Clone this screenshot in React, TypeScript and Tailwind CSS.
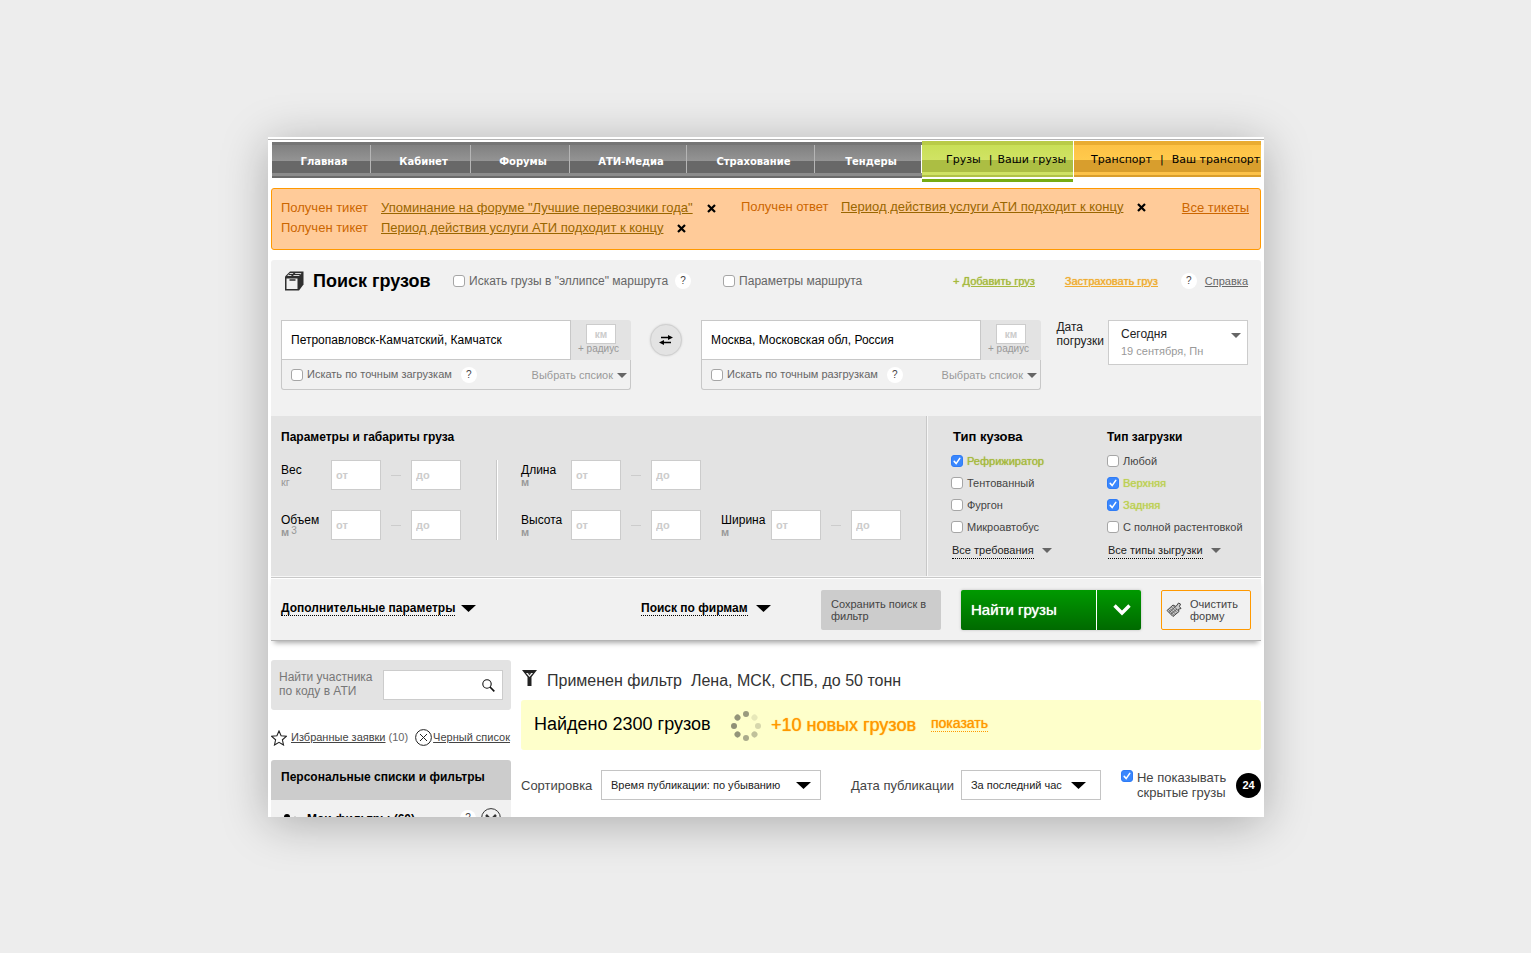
import type { ReactNode } from 'react'
import clsx from 'clsx'

const navItems = [
  { label: 'Главная', width: 'w-[99px]' },
  { label: 'Кабинет', width: 'w-[100px]' },
  { label: 'Форумы', width: 'w-[99px]' },
  { label: 'АТИ-Медиа', width: 'w-[117px]' },
  { label: 'Страхование', width: 'w-[128px]' },
  { label: 'Тендеры', width: 'w-[107px]' },
]

const bodyTypes = [
  { label: 'Рефрижиратор', checked: true, color: 'text-[#a6b93c]' },
  { label: 'Тентованный' },
  { label: 'Фургон' },
  { label: 'Микроавтобус' },
]

const loadTypes = [
  { label: 'Любой' },
  { label: 'Верхняя', checked: true, color: 'text-[#bdd052]' },
  { label: 'Задняя', checked: true, color: 'text-[#bdd052]' },
  { label: 'С полной растентовкой' },
]

function Checkbox({
  children,
  checked,
  className,
}: {
  children: ReactNode
  checked?: boolean
  className?: string
}) {
  return (
    <label className={clsx('flex items-center gap-[3px]', className)}>
      <span className="relative flex shrink-0">
        <input
          type="checkbox"
          defaultChecked={checked}
          className="peer size-3 appearance-none rounded-[3px] border border-[#a6a6a6] bg-white checked:border-[#2f7cf6] checked:bg-[#3a87fd]"
        />
        <svg
          viewBox="0 0 13 13"
          className="pointer-events-none absolute inset-0 hidden size-3 peer-checked:block"
        >
          <path d="M3.5 6.9 5.6 9.3 9.5 3.6" fill="none" stroke="#fff" strokeWidth="1.7" strokeLinecap="round" />
        </svg>
      </span>
      <span className="pl-px">{children}</span>
    </label>
  )
}

function Help() {
  return (
    <button
      type="button"
      aria-label="Подсказка"
      className="size-4 shrink-0 rounded-full bg-white text-center text-[10px] leading-4 text-[#444]"
    >
      ?
    </button>
  )
}

function Arrow({ className }: { className?: string }) {
  return (
    <svg viewBox="0 0 15 7" preserveAspectRatio="none" className={clsx('shrink-0 fill-current', className)}>
      <path d="M0 0h15L7.5 7z" />
    </svg>
  )
}

function Close() {
  return (
    <button type="button" aria-label="Закрыть" className="ml-[14px] size-[9px] shrink-0">
      <svg viewBox="0 0 9 9" className="size-[9px]">
        <path d="M1 1l7 7M8 1L1 8" stroke="#000" strokeWidth="2.2" />
      </svg>
    </button>
  )
}

function Ticket({ title, children }: { title: string; children: ReactNode }) {
  return (
    <div className="flex h-5 items-center">
      <span className="w-[100px] shrink-0 text-[#cc6600]">{title}</span>
      <a href="#" className="whitespace-nowrap text-[#996600] underline">
        {children}
      </a>
      <Close />
    </div>
  )
}

function Place({
  value,
  label,
  hint,
  className,
}: {
  value: string
  label: string
  hint: string
  className: string
}) {
  return (
    <div className={className}>
      <div className="flex h-10">
        <input
          aria-label={label}
          defaultValue={value}
          className="h-10 min-w-0 flex-1 border border-[#c8c8c8] bg-white px-[9px] text-[12px] text-black"
        />
        <div className="flex w-[60px] flex-col items-center rounded-tr-[3px] bg-[#e3e3e3] pt-1 text-[#999]">
          <input
            aria-label={`${label}: радиус, км`}
            placeholder="км"
            className="h-5 w-[30px] border border-[#ccc] bg-white text-center text-[10px] font-bold placeholder:text-[#ccc]"
          />
          <span className="pr-[5px] text-[10px] leading-[10px]">+ радиус</span>
        </div>
      </div>
      <div className="flex h-[30px] items-center rounded-b-[3px] border border-t-0 border-[#c8c8c8] pr-[3px] pl-[9px] text-[11px] text-[#666]">
        <Checkbox>{hint}</Checkbox>
        <span className="ml-[9px] flex">
          <Help />
        </span>
        <button type="button" className="ml-auto flex items-center gap-1 pt-[2px] text-[#999]">
          Выбрать спсиок
          <Arrow className="h-[5px] w-[10px] text-[#666]" />
        </button>
      </div>
    </div>
  )
}

function Range({ name, unit, className }: { name: string; unit: ReactNode; className?: string }) {
  const field =
    'h-[30px] w-[50px] border border-[#ccc] bg-white px-1 text-[11px] font-bold text-[#333] placeholder:text-[#ccc]'
  return (
    <div className={clsx('flex h-[30px] items-center', className)}>
      <div className="w-[50px] pt-[2px] text-[12px] leading-3 text-black">
        {name}
        <div className="flex gap-[2px] text-[11px] leading-3 text-[#999]">{unit}</div>
      </div>
      <input aria-label={`${name} от`} placeholder="от" className={field} />
      <span className="mx-[10px] h-px w-[10px] bg-[#ccc]" />
      <input aria-label={`${name} до`} placeholder="до" className={field} />
    </div>
  )
}

function TypeList({
  title,
  items,
  more,
  className,
  titleClass,
}: {
  title: string
  items: { label: string; checked?: boolean; color?: string }[]
  more: string
  className?: string
  titleClass: string
}) {
  return (
    <fieldset className={clsx('text-[11px] text-[#444]', className)}>
      <legend className={clsx('h-[34px] pt-[13px] leading-4 font-bold text-black', titleClass)}>{title}</legend>
      {items.map((item) => (
        <Checkbox
          key={item.label}
          checked={item.checked}
          className={clsx('h-[22px] whitespace-nowrap', item.color, item.color && '[text-shadow:0_0_1px_currentColor]')}
        >
          {item.label}
        </Checkbox>
      ))}
      <button type="button" className="mt-1 flex items-center gap-2 pl-px text-[#222]">
        <span className="border-b border-dotted border-black leading-4">{more}</span>
        <Arrow className="h-[5px] w-[10px] text-[#666]" />
      </button>
    </fieldset>
  )
}

function Select({ label, value, className, arrow }: { label: string; value: string; className: string; arrow: string }) {
  return (
    <div className={clsx('relative h-[30px]', className)}>
      <select
        aria-label={label}
        className="size-full appearance-none border border-[#c4c4c4] bg-white px-[9px] text-[11px] text-[#222]"
      >
        <option>{value}</option>
      </select>
      <Arrow className={clsx('pointer-events-none absolute top-[12px] h-[7px] w-[15px] text-black', arrow)} />
    </div>
  )
}

function Nav() {
  return (
    <nav className="ml-px flex font-['DejaVu_Sans',Verdana,sans-serif] text-[11px]">
      <div className="mt-px flex h-9 bg-[linear-gradient(#757575_3px,#808080_3px,#949494_19px,#686868_19px,#686868_31px,#8c8c8c_31px,#8c8c8c_34px,#6b6b6b_34px)] text-[10px] font-bold text-white">
        {navItems.map((item, i) => (
          <a
            key={item.label}
            href="#"
            className={clsx(
              'mt-[3px] flex h-7 items-center justify-center border-r pt-1 pl-[6px]',
              i < 5 ? 'border-[#b5b5b5]' : 'border-white',
              item.width,
            )}
          >
            {item.label}
          </a>
        ))}
      </div>
      <div className="w-[152px] border-r border-white">
        <div className="flex h-9 items-center bg-[linear-gradient(#b9cb47_4px,#c9df57_4px,#d0e364_19px,#acbe43_19px,#acbe43_31px,#cfe264_31px,#cfe264_34px,#b0c146_34px)] pt-[2px] pl-6 whitespace-nowrap text-black">
          <a href="#">Грузы</a>
          <span className="mr-[5px] ml-2">|</span>
          <a href="#">Ваши грузы</a>
        </div>
        <div className="mt-[2px] h-[3px] bg-[#76ab12]" />
      </div>
      <div className="flex h-9 flex-1 items-center bg-[linear-gradient(#e9ac32_4px,#fdc246_4px,#ffca4c_19px,#d89e2d_19px,#d89e2d_31px,#fcc24a_31px,#fcc24a_34px,#d99e2d_34px)] pt-[2px] pl-[17px] whitespace-nowrap text-black">
        <a href="#">Транспорт</a>
        <span className="mx-2">|</span>
        <a href="#">Ваш транспорт</a>
      </div>
    </nav>
  )
}

function Tickets() {
  return (
    <section className="mt-[6px] flex min-h-[62px] rounded-[3px] border border-[#ff9900] bg-[#ffcb99] px-[9px] pt-2 text-[13px]">
      <div className="w-[460px] pt-px">
        <Ticket title="Получен тикет">Упоминание на форуме "Лучшие перевозчики года"</Ticket>
        <Ticket title="Получен тикет">Период действия услуги АТИ подходит к концу</Ticket>
      </div>
      <Ticket title="Получен ответ">Период действия услуги АТИ подходит к концу</Ticket>
      <a href="#" className="mr-[2px] ml-auto pt-px leading-5 text-[#cc6600] underline">
        Все тикеты
      </a>
    </section>
  )
}

function SearchHeader() {
  return (
    <div className="flex h-[42px] items-center pr-[13px] pl-[13px] text-[12px] text-[#666]">
      <svg viewBox="0 0 20 20" className="size-5">
        <path d="M1 5.5 6 .5h13.5v13L15 19.5H1z" fill="#2f2f2f" />
        <path d="M2.5 7.5h11V18h-11z" fill="#f1f1f1" />
        <path d="M3 5l3-3h3.500L7 5zM9 5l2.500-3h6L15 5z" fill="#d8d8d8" />
        <path d="M5 3.500h11" stroke="#2f2f2f" />
        <path d="M5.500 9h6" stroke="#2f2f2f" strokeWidth="1.500" />
      </svg>
      <h1 className="ml-[9px] w-[140px] text-[18px] font-bold text-black">Поиск грузов</h1>
      <Checkbox>Искать грузы в "эллипсе" маршрута</Checkbox>
      <span className="mr-8 ml-[7px] flex">
        <Help />
      </span>
      <Checkbox>Параметры маршрута</Checkbox>
      <div className="ml-auto flex items-center text-[11px]">
        <a href="#" className="mr-[30px] text-[#a6b93c] [text-shadow:0_0_1px_currentColor]">
          + <span className="underline">Добавить груз</span>
        </a>
        <a href="#" className="mr-[23px] text-[#efac30] underline [text-shadow:0_0_1px_currentColor]">
          Застраховать груз
        </a>
        <Help />
        <a href="#" className="ml-2 underline">
          Справка
        </a>
      </div>
    </div>
  )
}

function Route() {
  return (
    <div className="flex items-start pt-[18px] pr-[13px] pb-[26px] pl-[10px]">
      <Place
        label="Откуда"
        value="Петропавловск-Камчатский, Камчатск"
        hint="Искать по точным загрузкам"
        className="w-[350px]"
      />
      <button
        type="button"
        aria-label="Поменять местами"
        className="mx-[19px] mt-1 flex size-8 shrink-0 items-center justify-center rounded-full border border-[#d0d0d0] bg-[#e3e3e3] shadow-[0_0_2px_#ccc]"
      >
        <svg viewBox="0 0 14 10" className="h-[10px] w-[14px]">
          <path d="M2 2.500h8M4 7.500h8" stroke="#000" strokeWidth="1.400" />
          <path d="M9 0l5 2.500L9 5zM5 5L0 7.500 5 10z" />
        </svg>
      </button>
      <Place
        label="Куда"
        value="Москва, Московская обл, Россия"
        hint="Искать по точным разгрузкам"
        className="w-[340px]"
      />
      <div className="ml-auto flex gap-1">
        <span id="date" className="text-[12px] leading-[14px] text-[#222]">
          Дата
          <br />
          погрузки
        </span>
        <button
          type="button"
          aria-describedby="date"
          className="flex h-[45px] w-[140px] justify-between border border-[#ccc] bg-white pt-[5px] pr-[6px] pl-3 text-left"
        >
          <span className="text-[12px] leading-4 text-[#222]">
            Сегодня
            <span className="block text-[11px] leading-[18px] text-[#999]">19 сентября, Пн</span>
          </span>
          <Arrow className="mt-[7px] h-[5px] w-[10px] text-[#666]" />
        </button>
      </div>
    </div>
  )
}

function Params() {
  return (
    <div className="flex h-40 bg-[#e3e3e3]">
      <div className="w-[655px] pl-[10px]">
        <h2 className="h-[44px] pt-[13px] text-[12px] leading-4 font-bold text-black">Параметры и габариты груза</h2>
        <div className="flex">
          <div className="flex flex-col gap-5">
            <Range name="Вес" unit="кг" />
            <Range
              name="Объем"
              unit={
                <>
                  <b>м</b>
                  <span className="text-[10px] leading-[10px]">3</span>
                </>
              }
            />
          </div>
          <div className="mr-[23px] ml-[35px] w-[2px] border-l border-[#c8c8c8] bg-white" />
          <div className="flex flex-col gap-5">
            <Range name="Длина" unit={<b>м</b>} />
            <div className="flex gap-5">
              <Range name="Высота" unit={<b>м</b>} />
              <Range name="Ширина" unit={<b>м</b>} />
            </div>
          </div>
        </div>
      </div>
      <div className="flex flex-1 border-l border-[#c8c8c8] pl-6 shadow-[inset_1px_0_#f6f6f6]">
        <TypeList
          title="Тип кузова"
          titleClass="text-[13px] pl-[2px]"
          items={bodyTypes}
          more="Все требования"
          className="w-[156px]"
        />
        <TypeList title="Тип загрузки" titleClass="text-[12px]" items={loadTypes} more="Все типы зыгрузки" />
      </div>
    </div>
  )
}

function Actions() {
  return (
    <div className="flex h-[65px] items-center border-b border-[#b4b4b4] bg-[#f1f1f1] px-[10px] pt-1 shadow-[0_5px_5px_-3px_#aaa,inset_0_1px_#f6f6f6,inset_0_2px_#c8c8c8,inset_0_3px_#fff]">
      <button type="button" className="flex w-[360px] items-center gap-[6px] pb-1 text-[12px] font-bold text-black">
        <span className="border-b border-dotted border-black leading-[14px]">Дополнительные параметры</span>
        <Arrow className="h-[7px] w-[15px]" />
      </button>
      <button type="button" className="flex items-center gap-2 pb-1 text-[12px] font-bold text-black">
        <span className="border-b border-dotted border-black leading-[14px]">Поиск по фирмам</span>
        <Arrow className="h-[7px] w-[15px]" />
      </button>
      <button
        type="button"
        className="ml-auto h-10 w-[120px] rounded-[2px] bg-[#ccc] px-[10px] text-left text-[11px] leading-3 text-[#444]"
      >
        Сохранить поиск в фильтр
      </button>
      <div className="ml-5 flex h-10 rounded-[2px] bg-linear-to-b from-[#009a00] to-[#006a00] shadow-[0_0_3px_#bbb]">
        <button
          type="button"
          className="w-[135px] pl-[10px] text-left text-[15px] text-white [text-shadow:0_0_1px_currentColor]"
        >
          Найти грузы
        </button>
        <button
          type="button"
          aria-label="Варианты поиска"
          className="flex w-[45px] items-center justify-center border-l border-white pl-[6px]"
        >
          <svg viewBox="0 0 18 12" className="h-3 w-[18px]">
            <path d="M1.500 1.500 9 9l7.500-7.500" fill="none" stroke="#fff" strokeWidth="3.400" />
          </svg>
        </button>
      </div>
      <button
        type="button"
        className="ml-5 flex h-10 w-[90px] items-center gap-2 rounded-[2px] border border-[#ff9900] pl-1 text-left text-[11px] leading-3 text-[#444]"
      >
        <svg viewBox="0 0 16 16" className="size-4 shrink-0" fill="none" stroke="#444">
          <path d="M1 8.500 7 3l3 1.500L12.500 1l2 1-1 2.500 1.500 2-2.500.8.500 2.200-6 5z" fill="#ccc" />
          <path d="M7 3.500l5.500 5.500M5.500 5l5.500 5.500M4 6.500 9.500 12M2.500 7.500 8 13.500M3 10.500l6-5.500M5 12l6-5" strokeWidth=".7" />
        </svg>
        Очистить форму
      </button>
    </div>
  )
}

function Sidebar() {
  return (
    <aside className="w-60 shrink-0">
      <div className="flex h-[50px] items-center justify-between rounded-[3px] bg-[#e3e3e3] px-2">
        <label htmlFor="code" className="pb-[2px] text-[12px] leading-[14px] text-[#777]">
          Найти участника
          <br />
          по коду в АТИ
        </label>
        <div className="flex h-[30px] w-[120px] items-center border border-[#ccc] bg-white pr-[7px]">
          <input id="code" className="h-full min-w-0 flex-1 px-2 text-[12px]" />
          <button type="button" aria-label="Найти">
            <svg viewBox="0 0 13 13" className="size-[13px]" fill="none" stroke="#111">
              <circle cx="5" cy="5" r="4.200" strokeWidth="1.100" />
              <path d="M8 8l4.300 4.300" strokeWidth="1.700" />
            </svg>
          </button>
        </div>
      </div>
      <div className="flex h-[50px] items-center pt-[5px] text-[11px] whitespace-nowrap text-[#444]">
        <svg viewBox="0 0 16 16" className="mr-1 size-4" fill="none" stroke="#222" strokeWidth="1.100">
          <path d="M8 1l2.100 4.800 5.200.5-3.900 3.500 1.100 5.200L8 12.300 3.500 15l1.100-5.200L.7 6.300l5.200-.5z" />
        </svg>
        <a href="#" className="underline">
          Избранные заявки
        </a>
        <span className="ml-[3px] text-[#666]">(10)</span>
        <svg viewBox="0 0 17 17" className="mr-px ml-auto size-[17px]" fill="none" stroke="#222">
          <circle cx="8.500" cy="8.500" r="7.900" />
          <path d="M5 5l7 7M12 5l-7 7" />
        </svg>
        <a href="#" className="mr-px underline">
          Черный список
        </a>
      </div>
      <h2 className="h-10 rounded-t-[3px] bg-[#ccc] pl-[10px] text-[12px] leading-[34px] font-bold text-black">
        Персональные списки и фильтры
      </h2>
      <div className="flex h-20 items-start bg-[#f1f1f1] pt-2 pr-[10px] pl-3 text-[12px] font-bold text-black">
        <svg viewBox="0 0 16 16" className="mt-[5px] mr-2 size-4">
          <circle cx="4" cy="4" r="3" />
          <circle cx="12" cy="5.500" r="1.700" />
          <path d="M0 14c0-8 8-8 8 0z" />
        </svg>
        <span className="mt-[5px] leading-3">Мои фильтры (60)</span>
        <span className="mt-[2px] mr-[5px] ml-auto flex font-normal">
          <Help />
        </span>
        <svg viewBox="0 0 20 20" className="size-5" fill="none" stroke="#333">
          <circle cx="10" cy="10" r="9.400" />
          <path d="M5 7l5 5 5-5" strokeWidth="2.500" />
        </svg>
      </div>
    </aside>
  )
}

const spinnerDots = [0.45, 0.1, 0.18, 0.28, 0.38, 0.48, 0.5, 0.48]

function Results() {
  return (
    <section className="min-w-0 flex-1">
      <div className="flex h-10 items-center text-[16px] text-[#333]">
        <svg viewBox="0 0 15 16" className="mr-[10px] mb-1 ml-px h-4 w-[15px]">
          <path d="M0 0h15L9.500 7v9h-4V7z" fill="#222" />
          <path d="M4 3h7L7.500 7z" fill="#fff" />
          <path d="M5.700 3h3.600L7.500 5.500z" fill="#444" />
        </svg>
        <p className="pt-[2px] whitespace-pre">Применен фильтр{'  '}Лена, МСК, СПБ, до 50 тонн</p>
      </div>
      <div className="flex h-[50px] items-center rounded-[3px] bg-[#feffcb] pl-[13px] text-[18px] text-black">
        <span className="w-[196px] pb-[2px]">Найдено 2300 грузов</span>
        <svg viewBox="0 0 32 32" className="mt-[2px] size-8">
          {spinnerDots.map((opacity, i) => (
            <circle
              key={i}
              cx="16"
              cy="4"
              r="3"
              fill="#222"
              opacity={opacity}
              transform={`rotate(${i * 45} 16 16)`}
            />
          ))}
        </svg>
        <span className="ml-[9px] text-[#ff9900] [text-shadow:0_0_1px_currentColor]">+10 новых грузов</span>
        <button
          type="button"
          className="mb-[3px] ml-[15px] border-b border-dotted border-[#ff9900] text-[14px] leading-4 text-[#ff9900] [text-shadow:0_0_1px_currentColor]"
        >
          показать
        </button>
      </div>
      <div className="mt-5 flex h-[30px] items-center text-[13px] text-[#444]">
        <span className="w-20 pt-[2px]">Сортировка</span>
        <Select label="Сортировка" value="Время публикации: по убыванию" className="w-[220px]" arrow="right-[10px]" />
        <span className="mr-[7px] ml-[30px] pt-[2px]">Дата публикации</span>
        <Select label="Дата публикации" value="За последний час" className="w-[140px]" arrow="right-[15px]" />
        <Checkbox checked className="ml-5 items-start! leading-[15px]">
          Не показывать
          <br />
          скрытые грузы
        </Checkbox>
        <span className="ml-auto size-[25px] rounded-full bg-black text-center text-[11px] leading-[25px] font-bold text-white">
          24
        </span>
      </div>
    </section>
  )
}

export default function App() {
  return (
    <div className="h-screen bg-[#ededed] pt-[137px] pb-[136px] pl-px font-['Liberation_Sans',Arial,sans-serif]">
      <main className="mx-auto h-full max-w-[996px] overflow-hidden bg-white px-[3px] pt-[2px] shadow-[0_6px_44px_rgba(0,0,0,0.28)]">
        <div className="-mr-[3px] -ml-[3px] mb-px h-px bg-[#b4b4b4]" />
        <Nav />
        <Tickets />
        <section className="mt-[10px] rounded-t-[3px] bg-[#f1f1f1]">
          <SearchHeader />
          <Route />
          <Params />
          <Actions />
        </section>
        <div className="mt-[19px] flex gap-[10px]">
          <Sidebar />
          <Results />
        </div>
      </main>
    </div>
  )
}
